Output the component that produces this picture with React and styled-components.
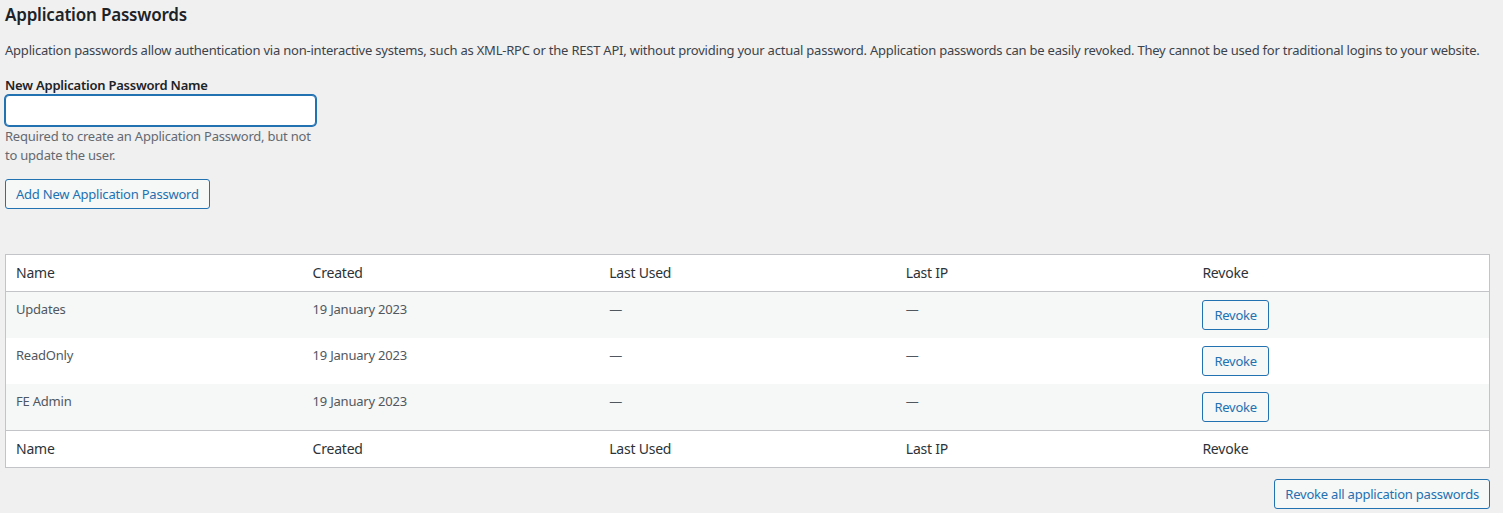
import React from "react";
import styled, { createGlobalStyle } from "styled-components";

const GlobalStyle = createGlobalStyle`
  html, body {
    margin: 0;
    padding: 0;
    background: #f0f0f1;
  }
  body {
    font-family: "Noto Sans", "Open Sans", sans-serif;
    font-size: 13px;
    line-height: 1.4em;
    letter-spacing: -0.22px;
    color: #3c434a;
  }
`;

const Section = styled.section`
  padding: 0 13px 0 5px;
  box-sizing: border-box;
`;

const Title = styled.h2`
  margin: 0;
  padding-top: 4px;
  font-size: 17px;
  line-height: 21px;
  font-weight: 600;
  letter-spacing: -0.2px;
  color: #1d2327;
`;

const Intro = styled.p`
  margin: 16px 0 0;
  font-size: 13px;
  line-height: 19px;
`;

const Field = styled.div`
  display: flex;
  flex-direction: column;
  width: 311px;
  margin-top: 16px;
`;

const Label = styled.label`
  font-weight: 600;
  font-size: 13px;
  line-height: 19px;
  color: #1d2327;
`;

const Input = styled.input`
  box-sizing: border-box;
  margin-top: 0;
  width: 311px;
  height: 31px;
  border: 1px solid #2271b1;
  box-shadow: 0 0 0 1px #2271b1;
  border-radius: 4px;
  background: #fff;
  outline: none;
`;

const Hint = styled.p`
  margin: 1px 0 0;
  color: #646970;
  font-size: 13px;
  line-height: 19px;
`;

const Button = styled.button`
  box-sizing: border-box;
  height: 30px;
  padding: 0 10px;
  border: 1px solid #2271b1;
  border-radius: 3px;
  background: #f6f7f7;
  color: #2271b1;
  font-family: inherit;
  font-size: 13px;
  letter-spacing: inherit;
  line-height: 28px;
  cursor: pointer;
  white-space: nowrap;
`;

const AddButton = styled(Button)`
  margin-top: 14px;
`;

const SmallButton = styled(Button)`
  padding: 0 11px;
`;

const Table = styled.table`
  width: 100%;
  margin-top: 45px;
  border: 1px solid #c3c4c7;
  border-spacing: 0;
  background: #fff;
  table-layout: fixed;
`;

const HeadCell = styled.th`
  text-align: left;
  font-weight: 400;
  font-size: 14px;
  line-height: 20px;
  color: #2c3338;
  padding: 8px 10px;
  border-bottom: ${(p) => (p.$foot ? "none" : "1px solid #c3c4c7")};
  border-top: ${(p) => (p.$foot ? "1px solid #c3c4c7" : "none")};
`;

const Row = styled.tr`
  background: ${(p) => (p.$striped ? "#f6f7f7" : "#fff")};
`;

const Cell = styled.td`
  vertical-align: top;
  padding: 8px 10px;
  height: 30px;
  font-size: 13px;
  line-height: 19px;
  color: #50575e;
`;

const Footer = styled.div`
  display: flex;
  justify-content: flex-end;
  margin-top: 11px;
`;

const columns = ["Name", "Created", "Last Used", "Last IP", "Revoke"];

const passwords = [
  { name: "Updates", created: "19 January 2023" },
  { name: "ReadOnly", created: "19 January 2023" },
  { name: "FE Admin", created: "19 January 2023" },
];

const HeaderRow = ({ foot }) => (
  <tr>
    {columns.map((c) => (
      <HeadCell key={c} $foot={foot}>
        {c}
      </HeadCell>
    ))}
  </tr>
);

const App = () => {
  return (
    <Section>
      <GlobalStyle />
      <Title>Application Passwords</Title>
      <Intro>
        Application passwords allow authentication via non-interactive systems,
        such as XML-RPC or the REST API, without providing your actual password.
        Application passwords can be easily revoked. They cannot be used for
        traditional logins to your website.
      </Intro>

      <Field>
        <Label htmlFor="new_application_password_name">
          New Application Password Name
        </Label>
        <Input id="new_application_password_name" type="text" />
        <Hint>
          Required to create an Application Password, but not to update the
          user.
        </Hint>
      </Field>

      <AddButton>Add New Application Password</AddButton>

      <Table>
        <thead>
          <HeaderRow />
        </thead>
        <tbody>
          {passwords.map((p, i) => (
            <Row key={p.name} $striped={i % 2 === 0}>
              <Cell>{p.name}</Cell>
              <Cell>{p.created}</Cell>
              <Cell>—</Cell>
              <Cell>—</Cell>
              <Cell>
                <SmallButton>Revoke</SmallButton>
              </Cell>
            </Row>
          ))}
        </tbody>
        <tfoot>
          <HeaderRow foot />
        </tfoot>
      </Table>

      <Footer>
        <Button>Revoke all application passwords</Button>
      </Footer>
    </Section>
  );
};

export default App;
